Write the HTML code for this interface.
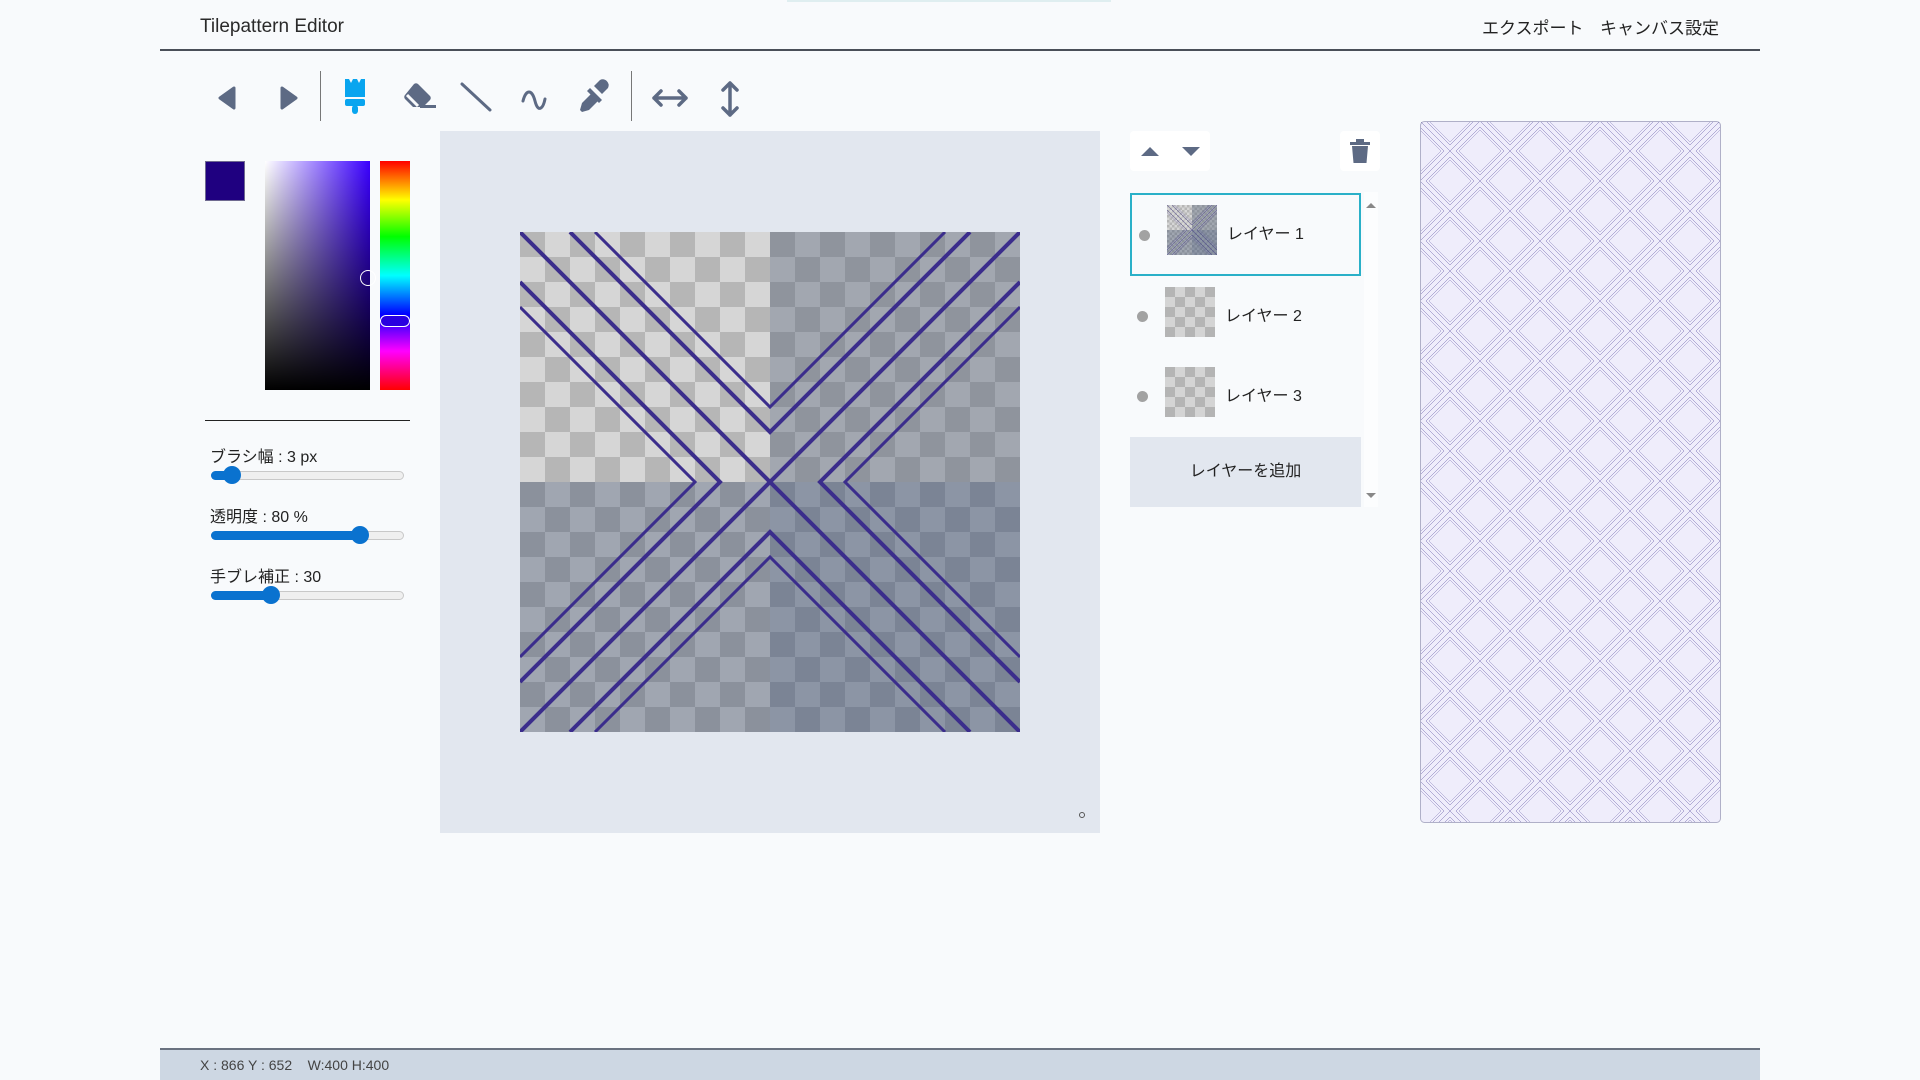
<!DOCTYPE html>
<html><head><meta charset="utf-8"><style>
*{margin:0;padding:0;box-sizing:border-box}
body{width:1920px;height:1080px;background:#f8fafc;font-family:"Liberation Sans","Noto Sans CJK JP",sans-serif;color:#222;position:relative;overflow:hidden}
.a{position:absolute}
.t{white-space:nowrap}
.track{position:absolute;height:9px;border:1px solid #c8c8c8;border-radius:5px;background:#efefef}
.fill{position:absolute;height:9px;border-radius:5px;background:#0a72cf}
.thumb{position:absolute;width:18px;height:18px;border-radius:50%;background:#0a72cf}
</style></head><body>
<svg width="0" height="0" style="position:absolute"><defs>
<g id="lines" fill="none" stroke="#3b2d8c">
<path d="M0 0L500 500M500 0L0 500" stroke-width="4"/>
<path d="M50 0L250 200L450 0M0 50L200 250L0 450M500 50L300 250L500 450M50 500L250 300L450 500" stroke-width="4"/>
<path d="M75 0L250 175L425 0M0 75L175 250L0 425M500 75L325 250L500 425M75 500L250 325L425 500" stroke-width="3"/>
</g>
<pattern id="chkTL" width="50" height="50" patternUnits="userSpaceOnUse"><rect width="50" height="50" fill="#d6d6d6"/><rect width="25" height="25" fill="#b6b6b6"/><rect x="25" y="25" width="25" height="25" fill="#b6b6b6"/></pattern>
<pattern id="chkTR" width="50" height="50" patternUnits="userSpaceOnUse"><rect width="50" height="50" fill="#a2a7b0"/><rect width="25" height="25" fill="#8f949d"/><rect x="25" y="25" width="25" height="25" fill="#8f949d"/></pattern>
<pattern id="chkBL" width="50" height="50" patternUnits="userSpaceOnUse"><rect width="50" height="50" fill="#a0a6b1"/><rect width="25" height="25" fill="#8b919c"/><rect x="25" y="25" width="25" height="25" fill="#8b919c"/></pattern>
<pattern id="chkBR" width="50" height="50" patternUnits="userSpaceOnUse"><rect width="50" height="50" fill="#8c95a5"/><rect width="25" height="25" fill="#7b8495"/><rect x="25" y="25" width="25" height="25" fill="#7b8495"/></pattern>
<g id="tile">
<rect width="250" height="250" fill="url(#chkTL)"/><rect x="250" width="250" height="250" fill="url(#chkTR)"/>
<rect y="250" width="250" height="250" fill="url(#chkBL)"/><rect x="250" y="250" width="250" height="250" fill="url(#chkBR)"/>
<use href="#lines"/>
</g>
<pattern id="prev" width="60" height="60" patternUnits="userSpaceOnUse"><g transform="scale(0.12)" opacity="0.7"><use href="#lines"/></g></pattern>
<pattern id="chk10" width="20" height="20" patternUnits="userSpaceOnUse"><rect width="20" height="20" fill="#d4d4d4"/><rect width="10" height="10" fill="#b4b4b4"/><rect x="10" y="10" width="10" height="10" fill="#b4b4b4"/></pattern>
</defs></svg>

<div class="a" style="left:787px;top:0;width:324px;height:2px;background:#dfeef0"></div>
<div class="a t" style="left:200px;top:16px;font-size:19px;color:#2a2a2a">Tilepattern Editor</div>
<div class="a t" style="left:1482px;top:14px;font-size:17px">エクスポート</div>
<div class="a t" style="left:1600px;top:14px;font-size:17px">キャンバス設定</div>
<div class="a" style="left:160px;top:49px;width:1600px;height:2px;background:#4a4f58"></div>

<svg class="a" style="left:200px;top:70px" width="560" height="60" viewBox="200 70 560 60">
<g fill="#5d6a84">
<path d="M234 88L220 98L234 108Z" stroke="#5d6a84" stroke-width="3" stroke-linejoin="round"/>
<path d="M282 88L296 98L282 108Z" stroke="#5d6a84" stroke-width="3" stroke-linejoin="round"/>
</g>
<rect x="320" y="71" width="1" height="50" fill="#777"/>
<rect x="631" y="71" width="1" height="50" fill="#777"/>
<g fill="#09a5ef"><path d="M345 79h4l2 4 2-4h4l2 4 2-4h4v18h-20z"/><rect x="345" y="99" width="20" height="7" rx="2"/><rect x="352" y="105" width="6" height="9" rx="3"/></g>
<g fill="#5d6a84"><path d="M414 84a3 3 0 0 1 4 0l12 12a3 3 0 0 1 0 4l-7 7h-10l-8-8a3 3 0 0 1 0-4z"/><rect x="420" y="105" width="16" height="3"/></g>
<path d="M407 95l11 11" stroke="#f8fafc" stroke-width="3"/>
<path d="M462 84L490 110" stroke="#5d6a84" stroke-width="3" stroke-linecap="round"/>
<path d="M523 101c3-12 9-12 12 0s8 8 10-2" fill="none" stroke="#5d6a84" stroke-width="3" stroke-linecap="round"/>
<g fill="#5d6a84"><path d="M600 80a6 6 0 0 1 8 8l-6 6-8-8z"/><path d="M590 88l12 12-3 3-12-12z"/><path d="M592 93l-10 10-2 7 2 2 7-2 10-10z"/></g>
<g stroke="#5d6a84" stroke-width="3.5" fill="none" stroke-linecap="round" stroke-linejoin="round"><path d="M654 98h32M661 91l-7 7 7 7M679 91l7 7-7 7"/><path d="M730 83v32M723 90l7-7 7 7M723 108l7 7 7-7"/></g>
</svg>

<div class="a" style="left:205px;top:161px;width:40px;height:40px;background:#1f0080;border:1px solid #6f6a90"></div>
<div class="a" style="left:265px;top:161px;width:105px;height:229px;background:linear-gradient(to bottom,rgba(0,0,0,0),#000),linear-gradient(to right,#fff,#3a00ff)"></div>
<div class="a" style="left:360px;top:270px;width:16px;height:16px;border:1.5px solid #fff;border-radius:50%"></div>
<div class="a" style="left:380px;top:161px;width:30px;height:229px;background:linear-gradient(to bottom,#f00 0%,#ff0 17%,#0f0 33%,#0ff 50%,#00f 67%,#f0f 83%,#f00 100%)"></div>
<div class="a" style="left:380px;top:315px;width:30px;height:12px;border:1.5px solid #fff;border-radius:6px;background:#2a00e0"></div>
<div class="a" style="left:205px;top:420px;width:205px;height:1px;background:#222"></div>

<div class="a t" style="left:210px;top:443px;font-size:16px">ブラシ幅 : 3 px</div>
<div class="track" style="left:211px;top:471px;width:193px"></div><div class="fill" style="left:211px;top:471px;width:25px"></div><div class="thumb" style="left:223px;top:466px"></div>
<div class="a t" style="left:210px;top:503px;font-size:16px">透明度 : 80 %</div>
<div class="track" style="left:211px;top:531px;width:193px"></div><div class="fill" style="left:211px;top:531px;width:150px"></div><div class="thumb" style="left:351px;top:526px"></div>
<div class="a t" style="left:210px;top:563px;font-size:16px">手ブレ補正 : 30</div>
<div class="track" style="left:211px;top:591px;width:193px"></div><div class="fill" style="left:211px;top:591px;width:60px"></div><div class="thumb" style="left:262px;top:586px"></div>

<div class="a" style="left:440px;top:131px;width:660px;height:702px;background:#e2e7ef"></div>
<svg class="a" style="left:520px;top:232px" width="500" height="500"><use href="#tile"/></svg>
<div class="a" style="left:1079px;top:812px;width:6px;height:6px;border:1px solid #555;border-radius:50%"></div>

<div class="a" style="left:1130px;top:131px;width:80px;height:40px;background:#fff;border-radius:4px"></div>
<svg class="a" style="left:1130px;top:131px" width="80" height="40"><path d="M11 25l9-9 9 9z M52 16l9 9 9-9z" fill="#5d6a84"/></svg>
<div class="a" style="left:1340px;top:131px;width:40px;height:40px;background:#fff;border-radius:4px"></div>
<svg class="a" style="left:1340px;top:131px" width="40" height="40"><path d="M10 11h20v3H10zM16 8h8v3h-8zM12 15h16l-1.5 17h-13z" fill="#5d6a84"/></svg>

<div class="a" style="left:1364px;top:192px;width:14px;height:315px;background:#fcfdfe"></div>
<svg class="a" style="left:1364px;top:195px" width="14" height="310"><path d="M2 13l5-5 5 5z" fill="#888"/><path d="M2 298l5 5 5-5z" fill="#888"/></svg>

<div class="a" style="left:1130px;top:193px;width:231px;height:83px;border:2px solid #2ab0c8"></div>
<div class="a" style="left:1139px;top:230px;width:11px;height:11px;border-radius:50%;background:#a2a2a2"></div>
<svg class="a" style="left:1167px;top:205px" width="50" height="50" viewBox="0 0 500 500"><use href="#tile"/></svg>
<div class="a t" style="left:1227px;top:220px;font-size:16px">レイヤー 1</div>

<div class="a" style="left:1137px;top:311px;width:11px;height:11px;border-radius:50%;background:#a2a2a2"></div>
<svg class="a" style="left:1165px;top:287px" width="50" height="50"><rect width="50" height="50" fill="url(#chk10)"/></svg>
<div class="a t" style="left:1225px;top:302px;font-size:16px">レイヤー 2</div>

<div class="a" style="left:1137px;top:391px;width:11px;height:11px;border-radius:50%;background:#a2a2a2"></div>
<svg class="a" style="left:1165px;top:367px" width="50" height="50"><rect width="50" height="50" fill="url(#chk10)"/></svg>
<div class="a t" style="left:1225px;top:382px;font-size:16px">レイヤー 3</div>

<div class="a" style="left:1130px;top:437px;width:231px;height:70px;background:#e2e7ef;font-size:16px;text-align:center;line-height:70px">レイヤーを追加</div>

<svg class="a" style="left:1420px;top:121px" width="301" height="702"><rect x="0.5" y="0.5" width="300" height="701" rx="4" fill="#efedfb" stroke="#b0b0c8"/><rect x="1" y="1" width="299" height="700" fill="url(#prev)"/></svg>

<div class="a" style="left:160px;top:1048px;width:1600px;height:32px;background:#cdd7e3;border-top:2px solid #6a7280"></div>
<div class="a t" style="left:200px;top:1057px;font-size:14px;color:#444">X : 866 Y : 652 &nbsp;&nbsp; W:400 H:400</div>
</body></html>
